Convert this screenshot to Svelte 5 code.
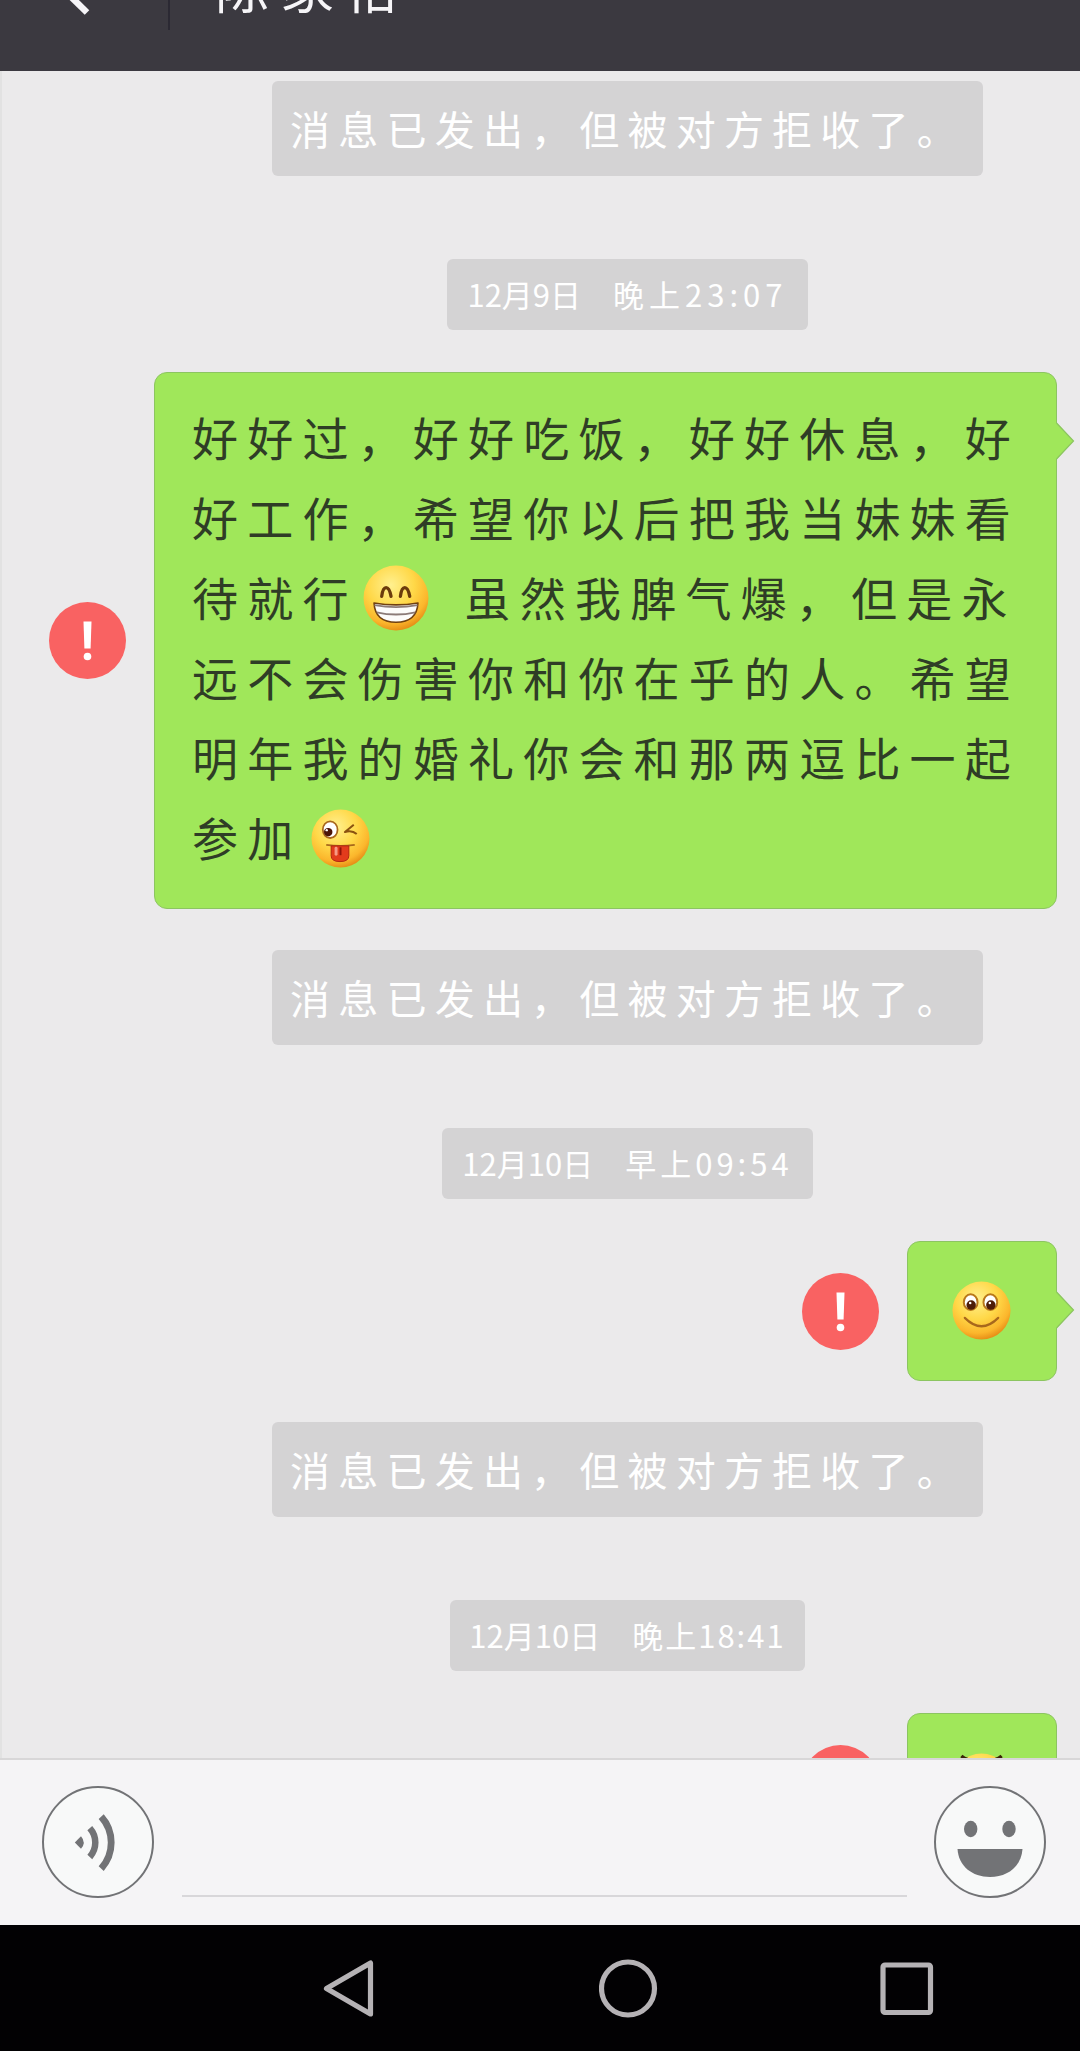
<script>
  const notice = '消息已发出，但被对方拒收了。';

  const feed = [
    { type: 'notice', text: notice },
    { type: 'time', day: '12月9日', clock: '晚上23:07', width: 361, spacing: 5 },
    {
      type: 'text',
      lines: [
        ['好好过，好好吃饭，好好休息，好'],
        ['好工作，希望你以后把我当妹妹看'],
        ['待就行', { face: 'grin' }, '虽然我脾气爆，但是永'],
        ['远不会伤害你和你在乎的人。希望'],
        ['明年我的婚礼你会和那两逗比一起'],
        ['参加', { face: 'wink' }],
      ],
    },
    { type: 'notice', text: notice },
    { type: 'time', day: '12月10日', clock: '早上09:54', width: 371, spacing: 4 },
    { type: 'face', face: 'smile' },
    { type: 'notice', text: notice },
    { type: 'time', day: '12月10日', clock: '晚上18:41', width: 355, spacing: 2 },
    { type: 'face', face: 'angry' },
  ];
</script>

{#snippet face(name)}
  <svg class="face {name}" viewBox="0 0 60 60">
    <defs>
      <radialGradient id="skin-{name}" cx="0.42" cy="0.3" r="0.72">
        <stop offset="0" stop-color="#fff08f" />
        <stop offset="0.5" stop-color="#ffd848" />
        <stop offset="0.82" stop-color="#fbb62c" />
        <stop offset="1" stop-color="#e58a14" />
      </radialGradient>
    </defs>
    <circle cx="30" cy="30" r="29.5" fill="url(#skin-{name})" />
    {#if name === 'grin'}
      <path d="M17 28.500q1-8 4-8t4.500 8M34 28.500q1-8 4-8t4.500 8" fill="none" stroke="#6b3b0c" stroke-width="3" stroke-linecap="round" />
      <path d="M10 34.500q20 3.500 40 0q-1 17.500-20 17.500t-20-17.500z" fill="#fdfcfb" stroke="#704010" stroke-width="1.400" stroke-linejoin="round" />
      <path d="M10.500 36.500q19.500 3.500 39 0M12.500 43q17.500 4 35 0" fill="none" stroke="#8c7b78" stroke-width="1.600" />
    {:else if name === 'wink'}
      <ellipse cx="19.500" cy="21" rx="7.500" ry="8.500" fill="#fff" stroke="#a8681c" stroke-width="1.800" />
      <circle cx="17.500" cy="23.500" r="4.300" fill="#4a1508" />
      <circle cx="16" cy="21.500" r="1.200" fill="#fff" />
      <path d="M43.500 16l-9 7.500q7-2.500 12 2" fill="none" stroke="#8a5210" stroke-width="2" stroke-linejoin="round" />
      <path d="M15.500 36.500q14.500 2 29 0" fill="none" stroke="#a8681c" stroke-width="1.800" />
      <path d="M20.500 37.500h18v10q0 6-9 6t-9-6z" fill="#e23b1c" stroke="#b02510" stroke-width="1" />
      <path d="M30 39v8" stroke="#8f1408" stroke-width="2" />
      <path d="M25.500 40v6" stroke="#f79a84" stroke-width="3" stroke-linecap="round" />
    {:else if name === 'smile'}
      <ellipse cx="19" cy="21.500" rx="7" ry="8" fill="#fff" stroke="#b9781a" stroke-width="2" />
      <ellipse cx="39" cy="21.500" rx="7" ry="8" fill="#fff" stroke="#b9781a" stroke-width="2" />
      <circle cx="19.500" cy="24.500" r="4.800" fill="#4d1d08" />
      <circle cx="39.500" cy="24.500" r="4.800" fill="#4d1d08" />
      <circle cx="18.500" cy="22.300" r="1.300" fill="#fff" />
      <circle cx="38.500" cy="22.300" r="1.300" fill="#fff" />
      <path d="M13 37.500q17 17 34 0" fill="none" stroke="#a8681c" stroke-width="2.200" stroke-linecap="round" />
    {:else}
      <path d="M9.500 3q6 5 16 5.500M50.500 3q-6 5-16 5.500" fill="none" stroke="#3a2408" stroke-width="3.500" />
    {/if}
  </svg>
{/snippet}

{#snippet failed()}
  <svg class="failed" viewBox="0 0 77 77">
    <circle cx="38.500" cy="38.500" r="38.500" fill="#f96262" />
    <path d="M34.500 19.500h8l-.9 27h-6.200z" fill="#fff" />
    <circle cx="38.500" cy="54.500" r="3.800" fill="#fff" />
  </svg>
{/snippet}

{#snippet tail()}
  <svg class="tail" viewBox="0 0 20 38">
    <path d="M0 1H2L18.500 19L2 37H0z" fill="#a0e75a" />
    <path d="M1.500 1L18.500 19L1.500 37" fill="none" stroke="#8cc561" stroke-width="1.200" />
  </svg>
{/snippet}

<div class="screen">
  <header>
    <svg class="back" viewBox="0 0 168 71">
      <path d="M62-12L87 12.500" stroke="#f6f5f8" stroke-width="6.500" fill="none" />
    </svg>
    <i class="divider"></i>
    <h1>陈家怡</h1>
  </header>

  <main>
    {#each feed as item}
      {#if item.type === 'notice'}
        <p class="notice">{item.text}</p>
      {:else if item.type === 'time'}
        <p class="time" style="width: {item.width}px">
          <span>{item.day}</span>
          <span style="letter-spacing: {item.spacing}px">{item.clock}</span>
        </p>
      {:else}
        <div class="row">
          {@render failed()}
          {#if item.type === 'text'}
            <div class="bubble">
              {#each item.lines as line}
                <div class="line">
                  {#each line as part}
                    {#if part.face}{@render face(part.face)}{:else}<span>{part}</span>{/if}
                  {/each}
                </div>
              {/each}
              {@render tail()}
            </div>
          {:else}
            <div class="bubble single">
              {@render face(item.face)}
              {@render tail()}
            </div>
          {/if}
        </div>
      {/if}
    {/each}
  </main>

  <footer>
    <svg class="round" viewBox="0 0 112 112">
      <circle cx="56" cy="56" r="55" fill="#f8f9f9" />
      <path d="M32.800 56.500L39 50.200Q44.500 56.500 39 62.800z" fill="#727376" stroke="none" />
      <path d="M47.800 42.200A21.600 21.600 0 0 1 47.800 71" fill="none" stroke-width="6.500" />
      <path d="M59.200 30.600A38.800 38.800 0 0 1 59.200 82.600" fill="none" stroke-width="6.800" />
    </svg>
    <div class="input"></div>
    <svg class="round" viewBox="0 0 112 112">
      <circle cx="56" cy="56" r="55" fill="#f8f9f9" />
      <g fill="#727376" stroke="none">
        <ellipse cx="36.700" cy="43" rx="6.700" ry="8.200" />
        <ellipse cx="75" cy="43" rx="6.700" ry="8.200" />
        <path d="M23.500 63H88.500C87.500 80 74 91 56 91S24.500 80 23.500 63z" />
      </g>
    </svg>
  </footer>

  <nav>
    <svg viewBox="0 0 60 60">
      <path d="M50.500 5V56L6.500 30.500z" />
    </svg>
    <svg viewBox="0 0 60 60">
      <circle cx="29" cy="30.500" r="26.500" />
    </svg>
    <svg viewBox="0 0 60 60">
      <rect x="5" y="7" width="47.500" height="47.500" rx="2" />
    </svg>
  </nav>
</div>

<style>
  :global(body) {
    margin: 0;
    background: #000;
  }

  .screen {
    display: flex;
    flex-direction: column;
    width: 1080px;
    height: 2051px;
    overflow: hidden;
    font-family: "Noto Sans CJK SC", "Noto Sans", sans-serif;
  }

  svg {
    display: block;
    flex: none;
  }

  header {
    display: flex;
    height: 71px;
    flex: none;
    overflow: hidden;
    background: #3b3940;
  }
  .back {
    width: 168px;
    height: 71px;
  }
  .divider {
    width: 2px;
    height: 30px;
    background: #2b2933;
  }
  h1 {
    margin: -44px 0 0 45px;
    font-size: 54px;
    font-weight: 400;
    line-height: 60px;
    letter-spacing: 11px;
    color: #f6f5f8;
  }

  main {
    display: flex;
    flex-direction: column;
    height: 1677px;
    flex: none;
    padding-top: 10px;
    overflow: hidden;
    background: #ebeaeb;
    box-shadow: inset 2px 0 #e2e2e2;
  }

  .notice,
  .time {
    display: flex;
    flex: none;
    align-items: center;
    justify-content: center;
    align-self: center;
    box-sizing: border-box;
    margin: 0 0 0 175px;
    border-radius: 6px;
    background: #d4d3d4;
    color: #fff;
    white-space: nowrap;
  }
  .notice {
    width: 711px;
    height: 95px;
    padding-bottom: 2px;
    margin-bottom: 83px;
    font-size: 40px;
    letter-spacing: 8.200px;
  }
  .time {
    height: 71px;
    gap: 32px;
    padding-bottom: 2px;
    margin-bottom: 42px;
    font-size: 31px;
  }

  .row {
    display: flex;
    flex: none;
    align-items: center;
    justify-content: flex-end;
    gap: 28px;
    margin: 0 23px 41px 0;
  }
  .failed {
    width: 77px;
    height: 77px;
  }
  .bubble {
    position: relative;
    box-sizing: border-box;
    width: 903px;
    height: 537px;
    padding: 25px 0 0 35px;
    border: 1px solid #8cc561;
    border-radius: 13px;
    background: #a0e75a;
  }
  .single {
    display: flex;
    align-items: center;
    justify-content: center;
    width: 150px;
    height: 140px;
    padding: 0 2px 2px 0;
  }
  .tail {
    position: absolute;
    top: 49px;
    right: -19px;
    width: 20px;
    height: 38px;
  }
  .line {
    display: flex;
    align-items: center;
    height: 80px;
    padding-left: 2px;
    font-size: 46px;
    letter-spacing: 9.200px;
    line-height: 76px;
    color: #2f3d26;
    white-space: nowrap;
  }
  .line span {
    height: 80px;
  }

  .face {
    width: 59px;
    height: 59px;
  }
  .grin {
    width: 66px;
    height: 66px;
    margin: 0 36px 0 5px;
  }
  .wink {
    margin-left: 9px;
  }

  footer {
    display: flex;
    box-sizing: border-box;
    height: 167px;
    flex: none;
    padding: 26px 34px 0 42px;
    border-top: 2px solid #d8d7d8;
    background: #f5f4f6;
  }
  .round {
    width: 112px;
    height: 112px;
    stroke: #727376;
    stroke-width: 2;
  }
  .input {
    flex: 1;
    height: 109px;
    margin: 0 27px 0 28px;
    border-bottom: 2px solid #d8d7da;
  }

  nav {
    display: flex;
    align-items: center;
    height: 126px;
    gap: 219px;
    padding-left: 320px;
    background: #020103;
  }
  nav svg {
    width: 60px;
    height: 60px;
    fill: none;
    stroke: #b5b2b5;
    stroke-width: 5.200;
    stroke-linejoin: round;
  }
</style>
